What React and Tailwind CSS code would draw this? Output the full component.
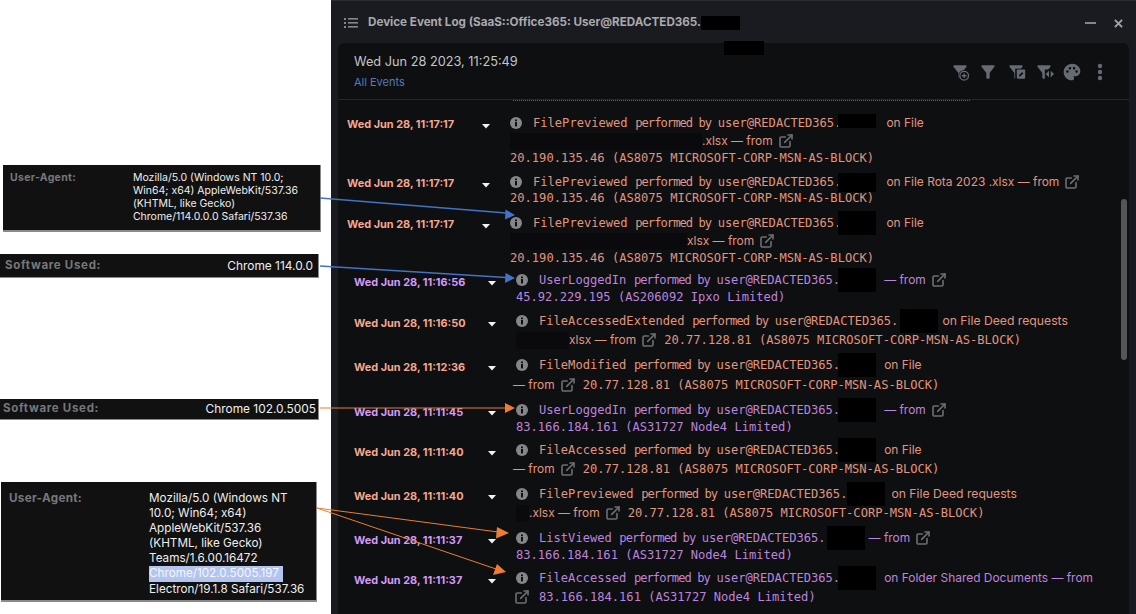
import { ExternalLink } from 'lucide-react';

const SANS = 'font-["Inter","Noto_Sans",sans-serif]';
const MONO = 'font-["DejaVu_Sans_Mono",monospace]';

const FUNNEL = 'M4.25 5.61C6.27 8.2 10 13 10 13v6c0 .55.45 1 1 1h2c.55 0 1-.45 1-1v-6s3.72-4.8 5.74-7.39c.51-.66.04-1.61-.79-1.61H5.04c-.83 0-1.3.95-.79 1.61z';
const PALETTE = 'M12 2C6.49 2 2 6.49 2 12s4.49 10 10 10c1.38 0 2.5-1.12 2.5-2.5 0-.61-.23-1.2-.64-1.67-.08-.1-.13-.21-.13-.33 0-.28.22-.5.5-.5H16c3.31 0 6-2.69 6-6 0-4.96-4.49-9-10-9zm5.5 11c-.83 0-1.5-.67-1.5-1.5s.67-1.5 1.5-1.5 1.5.67 1.5 1.5-.67 1.5-1.5 1.5zm-3-4c-.83 0-1.5-.67-1.5-1.5S13.67 6 14.5 6s1.5.67 1.5 1.5S15.33 9 14.5 9zM5 11.5c0-.83.67-1.5 1.5-1.5s1.5.67 1.5 1.5S7.33 13 6.5 13 5 12.33 5 11.5zm6-4c0 .83-.67 1.5-1.5 1.5S8 8.33 8 7.5 8.67 6 9.5 6s1.5.67 1.5 1.5z';

const MS = '(AS8075 MICROSOFT-CORP-MSN-AS-BLOCK)';

const Mono = ({ children }) => <span className={`${MONO} whitespace-pre text-[12.1px]`}>{children}</span>;
const Sans = ({ children }) => <span className={`${SANS} whitespace-pre text-[11.95px]`}>{children}</span>;
const Link = ({ className = 'ml-[5px] mr-[7px]' }) => <ExternalLink className={`w-[16px] h-[16px] flex-shrink-0 text-[#6e6f72] ${className}`} strokeWidth={2.4} />;

// event name, then the tighter "performed by", then the account
const Who = ({ name }) => (
  <>
    <Mono>{name}</Mono>
    <span className={`${MONO} ml-[7.5px] w-[75px] whitespace-pre text-[12.1px] tracking-[-0.95px]`}>performed by</span>
    <span className="w-[7.5px]" />
    <Mono>user@REDACTED365.</Mono>
  </>
);

// black bar laid over the redacted part of an address
const Box = ({ className = '' }) => <span className={`relative z-10 inline-block flex-shrink-0 w-[38px] h-[24px] bg-black ${className}`} />;
// the slightly darker patch left behind by redacted file names
const Patch = ({ className }) => <span className={`inline-block flex-shrink-0 h-[17px] bg-[#0a0a0c] ${className}`} />;

const rows = [
  {
    time: 'Wed Jun 28, 11:17:17', h: 'h-[59px]', first: true, line1: (
      <><Who name="FilePreviewed" /><Box className="ml-[-3px] !h-[14px] -translate-y-[2px]" /><span className="w-[10px]" /><Sans>on File</Sans></>
    ),
    lines: [
      <><Patch className="w-[192px]" /><Sans>.xlsx — from</Sans><Link /></>,
      <Mono>20.190.135.46 (AS8075 MICROSOFT-CORP-MSN-AS-BLOCK)</Mono>,
    ],
    gaps: ['mt-0', '-mt-px'],
  },
  {
    time: 'Wed Jun 28, 11:17:17', h: 'h-[41px]', first: true, line1: (
      <><Who name="FilePreviewed" /><Box className="ml-[-3px] !h-[19px]" /><span className="w-[10px]" /><Sans>on File Rota 2023 .xlsx — from</Sans><Link /></>
    ),
    lines: [<Mono>20.190.135.46 (AS8075 MICROSOFT-CORP-MSN-AS-BLOCK)</Mono>],
    gaps: ['-mt-0.5'],
  },
  {
    time: 'Wed Jun 28, 11:17:17', h: 'h-[57px]', first: true, line1: (
      <><Who name="FilePreviewed" /><Box className="ml-[-3px]" /><span className="w-[10px]" /><Sans>on File</Sans></>
    ),
    lines: [
      <><Patch className="w-[177px]" /><Sans>xlsx — from</Sans><Link /></>,
      <Mono>20.190.135.46 (AS8075 MICROSOFT-CORP-MSN-AS-BLOCK)</Mono>,
    ],
    gaps: ['mt-0', '-mt-px'],
  },
  {
    time: 'Wed Jun 28, 11:16:56', h: 'h-[41px]', purple: true, line1: (
      <><Who name="UserLoggedIn" /><Box className="ml-[-2px]" /><span className="w-[8px]" /><Sans>— from</Sans><Link /></>
    ),
    lines: [<Mono>45.92.229.195 (AS206092 Ipxo Limited)</Mono>],
    gaps: ['-mt-px'],
  },
  {
    time: 'Wed Jun 28, 11:16:50', h: 'h-[44px]', line1: (
      <><Who name="FileAccessedExtended" /><Box className="ml-[2px]" /><span className="w-[4px]" /><span className={`${SANS} whitespace-pre text-[12.2px]`}>on File Deed requests</span></>
    ),
    lines: [
      <><Patch className="w-[53px]" /><Sans>xlsx — from</Sans><Link /><Mono>20.77.128.81 {MS}</Mono></>,
    ],
    gaps: ['mt-px'],
  },
  {
    time: 'Wed Jun 28, 11:12:36', h: 'h-[45px]', line1: (
      <><Who name="FileModified" /><Box className="ml-[-2px]" /><span className="w-[8px]" /><Sans>on File</Sans></>
    ),
    lines: [<span className="flex items-center -ml-[3px]"><Sans>— from</Sans><Link /><Mono>20.77.128.81 {MS}</Mono></span>],
    gaps: ['mt-0.5'],
  },
  {
    time: 'Wed Jun 28, 11:11:45', h: 'h-[40px]', purple: true, line1: (
      <><Who name="UserLoggedIn" /><Box className="ml-[-2px]" /><span className="w-[8px]" /><Sans>— from</Sans><Link /></>
    ),
    lines: [<Mono>83.166.184.161 (AS31727 Node4 Limited)</Mono>],
    gaps: ['-mt-px'],
  },
  {
    time: 'Wed Jun 28, 11:11:40', h: 'h-[44px]', line1: (
      <><Who name="FileAccessed" /><Box className="ml-[-2px]" /><span className="w-[8px]" /><Sans>on File</Sans></>
    ),
    lines: [<span className="flex items-center -ml-[3px]"><Sans>— from</Sans><Link /><Mono>20.77.128.81 {MS}</Mono></span>],
    gaps: ['mt-px'],
  },
  {
    time: 'Wed Jun 28, 11:11:40', h: 'h-[44px]', line1: (
      <><Who name="FilePreviewed" /><Box className="ml-0" /><span className="w-[6px]" /><span className={`${SANS} whitespace-pre text-[12.2px]`}>on File Deed requests</span></>
    ),
    lines: [
      <><Patch className="w-[13px]" /><Sans>.xlsx — from</Sans><Link /><Mono>20.77.128.81 {MS}</Mono></>,
    ],
    gaps: ['mt-px'],
  },
  {
    time: 'Wed Jun 28, 11:11:37', h: 'h-[40px]', purple: true, line1: (
      <><Who name="ListViewed" /><Box className="ml-px" /><span className="w-[4px]" /><Sans>— from</Sans><Link /></>
    ),
    lines: [<Mono>83.166.184.161 (AS31727 Node4 Limited)</Mono>],
    gaps: ['-mt-px'],
  },
  {
    time: 'Wed Jun 28, 11:11:37', h: 'h-[45px]', purple: true, line1: (
      <><Who name="FileAccessed" /><Box className="ml-[-2px]" /><span className="w-[8px]" /><Sans>on Folder Shared Documents — from</Sans></>
    ),
    lines: [<><Link className="-ml-[2px] mr-[9px]" /><Mono>83.166.184.161 (AS31727 Node4 Limited)</Mono></>],
    gaps: ['mt-px'],
  },
];

function InfoDot() {
  return (
    <svg viewBox="0 0 12 12" className="w-[12px] h-[12px] flex-shrink-0">
      <circle cx="6" cy="6" r="6" fill="#85868a" />
      <rect x="5" y="5" width="2" height="4.4" fill="#0e0f11" />
      <rect x="5" y="2.5" width="2" height="1.7" fill="#0e0f11" />
    </svg>
  );
}

function Row({ row }) {
  const color = row.purple ? 'text-[#bd84dd]' : 'text-[#e1957f]';
  const dateColor = row.purple ? 'text-[#d49af5]' : 'text-[#f5a78f]';
  return (
    <div className={`flex items-start flex-shrink-0 ${row.h} ${row.first ? 'pl-[9px]' : 'pl-[16px]'}`}>
      <div className={`${SANS} h-[18px] leading-[18px] text-[10.9px] font-bold whitespace-nowrap ${dateColor} ${row.first ? 'w-[135px] pt-px' : 'w-[134px] pt-[2px]'}`}>
        {row.time}
      </div>
      <svg viewBox="0 0 8 5" className="w-[8px] h-[5px] mt-[10px] flex-shrink-0">
        <path d="M0 0h8L4 4.6z" fill="#f2f2f2" />
      </svg>
      <div className={`ml-[20px] ${color}`}>
        <div className="flex items-center h-[18px] leading-[18px]">
          <InfoDot />
          <span className="w-[11px]" />
          {row.line1}
        </div>
        {row.lines.map((line, i) => (
          <div key={i} className={`flex items-center h-[18px] leading-[18px] ${row.gaps[i]}`}>{line}</div>
        ))}
      </div>
    </div>
  );
}

function FilterIcon({ badge }) {
  return (
    <svg viewBox="0 0 24 24" className="w-[20px] h-[20px]" fill="#666a73">
      <path d={FUNNEL} />
      {badge === 'plus' && (
        <>
          <circle cx="17" cy="16.5" r="7" fill="#0e0f11" />
          <circle cx="17" cy="16.5" r="5.2" fill="none" stroke="#666a73" strokeWidth="1.6" />
          <path d="M14.2 16.5h5.6M17 13.7v5.6" stroke="#666a73" strokeWidth="1.6" />
        </>
      )}
      {badge === 'edit' && (
        <>
          <rect x="11" y="8" width="13" height="15" fill="#0e0f11" />
          <rect x="13" y="9" width="10" height="11" rx="1" fill="#666a73" />
          <path d="M15.5 17.5l.3-2 3.4-3.4 1.6 1.6-3.4 3.4z" fill="#0e0f11" />
        </>
      )}
      {badge === 'code' && (
        <>
          <rect x="13" y="9" width="11" height="11" fill="#0e0f11" />
          <path d="M14 14.5l4-4v8zM24 14.5l-4-4v8z" fill="#666a73" />
        </>
      )}
    </svg>
  );
}

function UserAgent({ className, valueClass, children }) {
  return (
    <div className={`bg-[#111112] border-b-2 border-r border-[#8a8a8a] flex ${SANS} ${className}`}>
      <div className="font-bold text-[#77787a] tracking-[0.3px]">User-Agent:</div>
      <div className={`text-[#eeeeee] ${valueClass}`}>{children}</div>
    </div>
  );
}

function Software({ value, className }) {
  return (
    <div className={`h-[24px] w-[319px] bg-[#111112] border-b border-r border-[#8a8a8a] flex items-center justify-between ${SANS} text-[11.9px] ${className}`}>
      <span className="font-bold text-[#77787a] text-[11.5px] tracking-[0.7px]">Software Used:</span>
      <span className="text-[#eeeeee]">{value}</span>
    </div>
  );
}

function Arrows() {
  return (
    <svg className="absolute inset-0 z-20 pointer-events-none" width="1136" height="614" viewBox="0 0 1136 614">
      <path d="M320 198L506 213" stroke="#4472c4" strokeWidth="1.5" fill="none" />
      <path d="M515 215L505 219.5L505.5 209.5z" fill="#4472c4" />
      <path d="M320 266L506 277.5" stroke="#4472c4" strokeWidth="1.5" fill="none" />
      <path d="M515 278L505 283L505.5 273z" fill="#4472c4" />
      <path d="M320 408L506 408" stroke="#ed7d31" strokeWidth="1" fill="none" />
      <path d="M515 408L505 413L505 403z" fill="#ed7d31" />
      <path d="M317 508L498 532" stroke="#ed7d31" strokeWidth="1" fill="none" />
      <path d="M509 533L496 538.5L497 527z" fill="#ed7d31" />
      <path d="M317 508L496 569" stroke="#ed7d31" strokeWidth="1" fill="none" />
      <path d="M506 572L493 575L497 564z" fill="#ed7d31" />
    </svg>
  );
}

export default function App() {
  return (
    <div className="relative flex w-[1136px] h-[614px] overflow-hidden bg-white">
      {/* Callouts pasted next to the log */}
      <div className="w-[331px] flex-shrink-0 flex flex-col items-start">
        <UserAgent className="mt-[165px] ml-[3px] w-[318px] h-[67px] pl-[7px] pt-[6px] text-[10.5px] leading-[13px]" valueClass="ml-[57px] w-[180px]">
          Mozilla/5.0 (Windows NT 10.0; Win64; x64) AppleWebKit/537.36 (KHTML, like Gecko) Chrome/114.0.0.0 Safari/537.36
        </UserAgent>
        <Software value="Chrome 114.0.0" className="mt-[22px] pl-[5px] pr-[5px]" />
        <Software value="Chrome 102.0.5005" className="mt-[121px] !h-[21px] pl-[3px] pr-[2px]" />
        <UserAgent className="mt-[62px] ml-px w-[316px] h-[120px] pl-[8px] pt-[9px] text-[11.7px] leading-[15px]" valueClass="ml-[67px] w-[165px] whitespace-nowrap">
          Mozilla/5.0 (Windows NT<br />10.0; Win64; x64)<br />AppleWebKit/537.36<br />(KHTML, like Gecko)<br />Teams/1.6.00.16472<br />
          <span className="bg-[#b3c5ee] inline-block h-[16px] w-[134px] text-[#f4f6fb]">Chrome/102.0.5005.197</span><br />
          Electron/19.1.8 Safari/537.36
        </UserAgent>
      </div>

      {/* Device event log window */}
      <div className="relative flex-1 h-full flex flex-col bg-[#1a1b21] border-t border-[#2c2d33]">
        <div className="h-[42px] flex-shrink-0 flex items-center pl-[13px] pr-[13px] pt-[2px]">
          <svg viewBox="0 0 14 12" className="w-[14px] h-[12px] flex-shrink-0" fill="#85868a">
            <rect x="0" y="1" width="2" height="2" /><rect x="4" y="1" width="10" height="1.6" />
            <rect x="0" y="5" width="2" height="2" /><rect x="4" y="5" width="10" height="1.6" />
            <rect x="0" y="9" width="2" height="2" /><rect x="4" y="9" width="10" height="1.6" />
          </svg>
          <span className={`${SANS} ml-[10px] text-[11.65px] font-bold text-[#a9aaad] whitespace-nowrap`}>
            Device Event Log (SaaS::Office365: User@REDACTED365.
          </span>
          <span className="w-[39px] h-[14px] bg-black" />
          <span className="flex-1" />
          <span className="w-[11px] h-[2px] bg-[#85868a]" />
          <svg viewBox="0 0 10 10" className="ml-[18px] w-[9px] h-[9px]" stroke="#a0a1a5" strokeWidth="2.2">
            <path d="M1 1l8 8M9 1l-8 8" />
          </svg>
        </div>

        <div className="relative ml-[7px] mr-[7px] flex-1 min-h-0 bg-[#0e0f11] rounded-t-md flex flex-col">
          <div className="relative h-[57px] flex-shrink-0 flex items-start justify-between border-b border-[#26272b] pl-[16px] pr-[26px]">
            <div className={SANS}>
              <div className="mt-[10px] text-[12.75px] leading-[18px] text-[#c4c5c7]">Wed Jun 28 2023, 11:25:49</div>
              <div className="mt-[4px] text-[11px] leading-[14px] text-[#5878b8]">All Events</div>
            </div>
            <span className="absolute left-[386px] top-[-2px] w-[40px] h-[14px] bg-black" />
            <div className="mt-[19px] flex items-center gap-[8px]">
              <FilterIcon badge="plus" />
              <FilterIcon />
              <FilterIcon badge="edit" />
              <FilterIcon badge="code" />
              <svg viewBox="0 0 24 24" className="w-[20px] h-[20px]" fill="#666a73"><path d={PALETTE} /></svg>
              <svg viewBox="0 0 6 18" className="ml-[7px] w-[6px] h-[18px]" fill="#666a73">
                <circle cx="3" cy="3" r="2.2" /><circle cx="3" cy="9" r="2.2" /><circle cx="3" cy="15" r="2.2" />
              </svg>
            </div>
          </div>

          <div className="relative flex-1 min-h-0 overflow-hidden pt-[14px] flex flex-col">
            {/* bottom edge of the row scrolled away under the header */}
            <div className="absolute left-[175px] top-0 w-[457px] border-t border-dotted border-[#5a5b60]" />
            {rows.map((row, i) => <Row key={i} row={row} />)}
            <div className="absolute right-[2px] top-[99px] w-[6px] h-[161px] rounded-full bg-[#55565a]" />
          </div>
        </div>
      </div>

      <Arrows />
    </div>
  );
}
